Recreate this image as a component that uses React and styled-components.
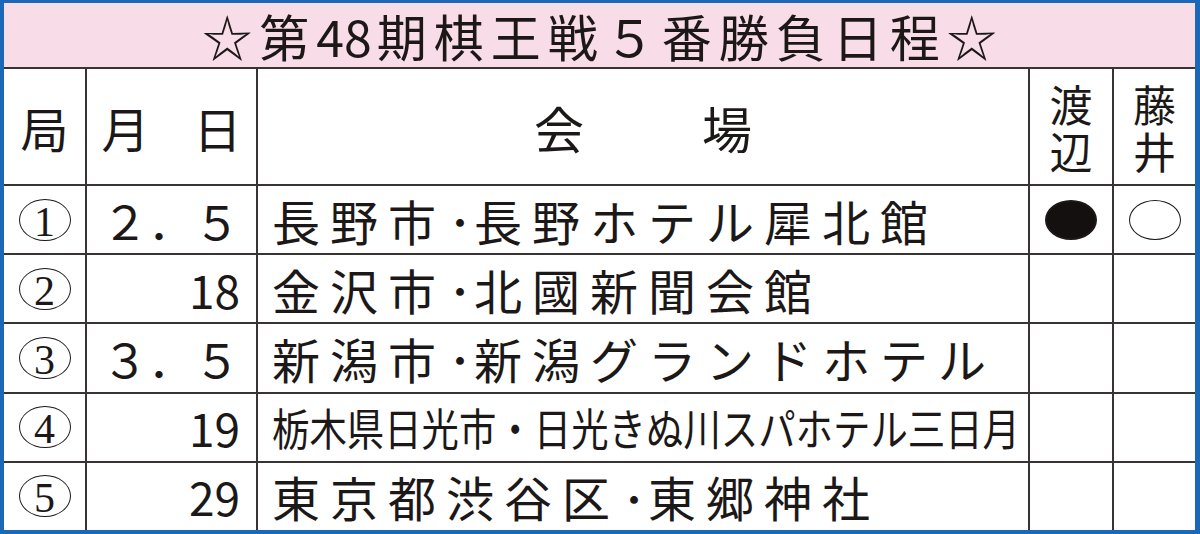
import React from 'react'
import styled, { createGlobalStyle } from 'styled-components'

const GlobalStyle = createGlobalStyle`
    html, body {
        margin: 0;
        padding: 0;
        background: #fff;
    }
    body {
        width: 1200px;
        height: 534px;
        overflow: hidden;
    }
`

const Frame = styled.div`
    box-sizing: border-box;
    width: 1200px;
    height: 534px;
    border-style: solid;
    border-color: #1b68b8;
    border-width: 3px 5px 4px 4px;
    background: #383434;
    display: grid;
    grid-template-columns: 81px 169px 770px 82px 81px;
    grid-template-rows: 64px 115px repeat(5, 1fr);
    gap: 2px;
    font-family: 'Noto Sans CJK JP', sans-serif;
    color: #1c1818;
`

const Title = styled.div`
    grid-column: 1 / -1;
    background: #f8dde8;
    display: flex;
    align-items: center;
    justify-content: center;
    font-size: 50px;
    letter-spacing: 7px;
    padding-left: 7px;
    line-height: 1;
`

const Tight = styled.span`
    letter-spacing: 0;
    margin-right: 5px;
`

const Cell = styled.div`
    background: #fff;
    display: flex;
    align-items: center;
    justify-content: ${({ $align }) => $align || 'center'};
    min-width: 0;
    overflow: hidden;
    line-height: 1;
`

const HeadText = styled.span`
    font-size: 48px;
    font-weight: 400;
`

const MonthDay = styled(HeadText)`
    display: flex;
    gap: 44px;
`

const VenueHead = styled(HeadText)`
    display: flex;
    gap: 118px;
    font-size: 50px;
`

const Stack = styled.span`
    display: flex;
    flex-direction: column;
    align-items: center;
    gap: 4px;
    font-size: 43px;
    line-height: 43px;
    font-weight: 400;
`

const CircleNum = styled.span`
    box-sizing: border-box;
    width: 52px;
    height: 42px;
    border: 1.6px solid #1c1818;
    border-radius: 50%;
    display: flex;
    align-items: center;
    justify-content: center;
    font-family: 'Liberation Serif', serif;
    font-size: 42px;
    line-height: 1;
    padding-top: 4px;
`

const DateText = styled.span`
    font-size: 46px;
    padding-right: 16px;
`

const Place = styled.span`
    display: flex;
    align-items: center;
    font-size: ${({ $condensed }) => ($condensed ? '44px' : '48px')};
    letter-spacing: ${({ $condensed }) => ($condensed ? '0' : '10px')};
    padding-left: 14px;
    white-space: nowrap;
    transform-origin: 14px 50%;
    transform: ${({ $condensed }) => ($condensed ? 'scaleX(0.85)' : 'none')};
`

const Dot = styled.span`
    letter-spacing: 0;
    font-size: ${({ $condensed }) => ($condensed ? '44px' : '28px')};
    font-weight: ${({ $condensed }) => ($condensed ? 400 : 900)};
    padding-top: ${({ $condensed }) => ($condensed ? '0' : '5px')};
`

const Mark = styled.span`
    box-sizing: border-box;
    width: 52px;
    height: 40px;
    border-radius: 50%;
    border: ${({ $filled }) => ($filled ? '2px' : '1.6px')} solid #1c1818;
    background: ${({ $filled }) => ($filled ? '#141010' : '#fff')};
`

const games = [
    { no: 1, date: '２．５', place: '長野市・長野ホテル犀北館', watanabe: 'win', fujii: 'loss' },
    { no: 2, date: '18', place: '金沢市・北國新聞会館' },
    { no: 3, date: '３．５', place: '新潟市・新潟グランドホテル' },
    { no: 4, date: '19', place: '栃木県日光市・日光きぬ川スパホテル三日月', condensed: true },
    { no: 5, date: '29', place: '東京都渋谷区・東郷神社' },
]

const Result = ({ value }) => {
    if (!value) return null
    return <Mark $filled={value === 'win'} aria-label={value === 'win' ? '●' : '○'} />
}

const PlaceName = ({ text, condensed }) => {
    const [city, site] = text.split('・')
    return (
        <Place $condensed={condensed}>
            <span>{city}</span>
            <Dot $condensed={condensed}>・</Dot>
            <span>{site}</span>
        </Place>
    )
}

export default function App() {
    return (
        <>
            <GlobalStyle />
            <Frame>
                <Title>
                    ☆第<Tight>48</Tight>期棋王戦５番勝負日程☆
                </Title>

                <Cell>
                    <HeadText>局</HeadText>
                </Cell>
                <Cell>
                    <MonthDay>
                        <span>月</span>
                        <span>日</span>
                    </MonthDay>
                </Cell>
                <Cell>
                    <VenueHead>
                        <span>会</span>
                        <span>場</span>
                    </VenueHead>
                </Cell>
                <Cell>
                    <Stack>
                        <span>渡</span>
                        <span>辺</span>
                    </Stack>
                </Cell>
                <Cell>
                    <Stack>
                        <span>藤</span>
                        <span>井</span>
                    </Stack>
                </Cell>

                {games.map(g => (
                    <React.Fragment key={g.no}>
                        <Cell>
                            <CircleNum>{g.no}</CircleNum>
                        </Cell>
                        <Cell $align="flex-end">
                            <DateText>{g.date}</DateText>
                        </Cell>
                        <Cell $align="flex-start">
                            <PlaceName text={g.place} condensed={g.condensed} />
                        </Cell>
                        <Cell>
                            <Result value={g.watanabe} />
                        </Cell>
                        <Cell>
                            <Result value={g.fujii} />
                        </Cell>
                    </React.Fragment>
                ))}
            </Frame>
        </>
    )
}
